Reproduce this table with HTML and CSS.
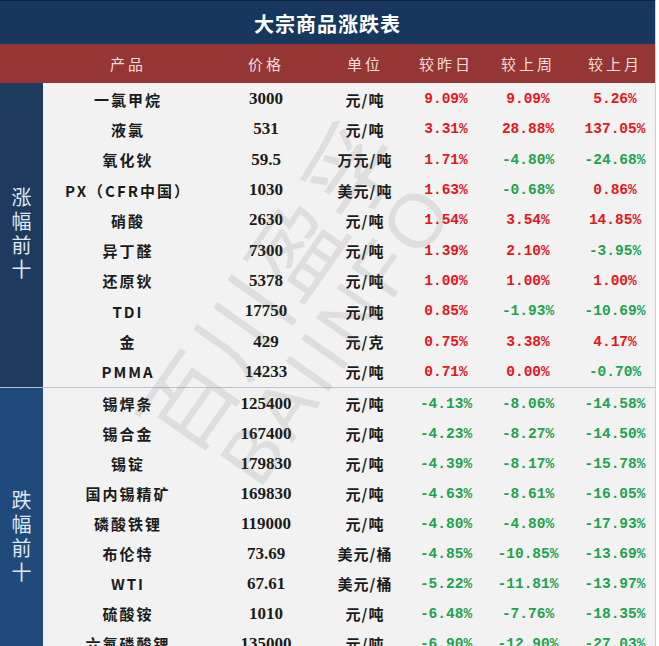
FILE: index.html
```html
<!DOCTYPE html>
<html lang="zh">
<head>
<meta charset="utf-8">
<title>大宗商品涨跌表</title>
<link rel="stylesheet" href="styles.css">
</head>
<body>
<div class="page">
  <div class="title">大宗商品涨跌表</div>
  <div class="head">
    <div></div>
    <div>产品</div><div>价格</div><div>单位</div><div>较昨日</div><div>较上周</div><div>较上月</div>
  </div>

  <div class="group up">
    <div class="side"><span>涨幅前十</span></div>
    <div class="rows">
      <div class="row"><div class="name">一氯甲烷</div><div class="price">3000</div><div class="unit">元/吨</div><div class="pct r">9.09%</div><div class="pct r">9.09%</div><div class="pct r">5.26%</div></div>
      <div class="row"><div class="name">液氯</div><div class="price">531</div><div class="unit">元/吨</div><div class="pct r">3.31%</div><div class="pct r">28.88%</div><div class="pct r">137.05%</div></div>
      <div class="row"><div class="name">氧化钬</div><div class="price">59.5</div><div class="unit">万元/吨</div><div class="pct r">1.71%</div><div class="pct g">-4.80%</div><div class="pct g">-24.68%</div></div>
      <div class="row"><div class="name">PX（CFR中国）</div><div class="price">1030</div><div class="unit">美元/吨</div><div class="pct r">1.63%</div><div class="pct g">-0.68%</div><div class="pct r">0.86%</div></div>
      <div class="row"><div class="name">硝酸</div><div class="price">2630</div><div class="unit">元/吨</div><div class="pct r">1.54%</div><div class="pct r">3.54%</div><div class="pct r">14.85%</div></div>
      <div class="row"><div class="name">异丁醛</div><div class="price">7300</div><div class="unit">元/吨</div><div class="pct r">1.39%</div><div class="pct r">2.10%</div><div class="pct g">-3.95%</div></div>
      <div class="row"><div class="name">还原钬</div><div class="price">5378</div><div class="unit">元/吨</div><div class="pct r">1.00%</div><div class="pct r">1.00%</div><div class="pct r">1.00%</div></div>
      <div class="row"><div class="name">TDI</div><div class="price">17750</div><div class="unit">元/吨</div><div class="pct r">0.85%</div><div class="pct g">-1.93%</div><div class="pct g">-10.69%</div></div>
      <div class="row"><div class="name">金</div><div class="price">429</div><div class="unit">元/克</div><div class="pct r">0.75%</div><div class="pct r">3.38%</div><div class="pct r">4.17%</div></div>
      <div class="row"><div class="name">PMMA</div><div class="price">14233</div><div class="unit">元/吨</div><div class="pct r">0.71%</div><div class="pct r">0.00%</div><div class="pct g">-0.70%</div></div>
    </div>
  </div>

  <div class="group down">
    <div class="side"><span>跌幅前十</span></div>
    <div class="rows">
      <div class="row"><div class="name">锡焊条</div><div class="price">125400</div><div class="unit">元/吨</div><div class="pct g">-4.13%</div><div class="pct g">-8.06%</div><div class="pct g">-14.58%</div></div>
      <div class="row"><div class="name">锡合金</div><div class="price">167400</div><div class="unit">元/吨</div><div class="pct g">-4.23%</div><div class="pct g">-8.27%</div><div class="pct g">-14.50%</div></div>
      <div class="row"><div class="name">锡锭</div><div class="price">179830</div><div class="unit">元/吨</div><div class="pct g">-4.39%</div><div class="pct g">-8.17%</div><div class="pct g">-15.78%</div></div>
      <div class="row"><div class="name">国内锡精矿</div><div class="price">169830</div><div class="unit">元/吨</div><div class="pct g">-4.63%</div><div class="pct g">-8.61%</div><div class="pct g">-16.05%</div></div>
      <div class="row"><div class="name">磷酸铁锂</div><div class="price">119000</div><div class="unit">元/吨</div><div class="pct g">-4.80%</div><div class="pct g">-4.80%</div><div class="pct g">-17.93%</div></div>
      <div class="row"><div class="name">布伦特</div><div class="price">73.69</div><div class="unit">美元/桶</div><div class="pct g">-4.85%</div><div class="pct g">-10.85%</div><div class="pct g">-13.69%</div></div>
      <div class="row"><div class="name">WTI</div><div class="price">67.61</div><div class="unit">美元/桶</div><div class="pct g">-5.22%</div><div class="pct g">-11.81%</div><div class="pct g">-13.97%</div></div>
      <div class="row"><div class="name">硫酸铵</div><div class="price">1010</div><div class="unit">元/吨</div><div class="pct g">-6.48%</div><div class="pct g">-7.76%</div><div class="pct g">-18.35%</div></div>
      <div class="row"><div class="name">六氟磷酸锂</div><div class="price">135000</div><div class="unit">元/吨</div><div class="pct g">-6.90%</div><div class="pct g">-12.90%</div><div class="pct g">-27.03%</div></div>
      <div class="row"></div>
    </div>
  </div>

  <div class="watermark">
    <div class="wm-cn">百川盈孚</div>
    <div class="wm-en">BAIINFO</div>
  </div>
</div>
</body>
</html>
```

FILE: styles.css
```css
* { box-sizing: border-box; margin: 0; padding: 0; }

html, body {
  background: #ffffff;
  overflow: hidden;
}

body {
  font-family: "Noto Sans CJK SC", "Liberation Sans", sans-serif;
  color: #1b1b1b;
}

.page {
  position: relative;
  width: 656px;
  border-right: 1px solid #c9d1dc;
  overflow: hidden;
}

.title {
  height: 44px;
  background: #17375e;
  border-top: 1px solid #0d2440;
  color: #ffffff;
  font-size: 20px;
  font-weight: 700;
  letter-spacing: 1px;
  display: flex;
  align-items: center;
  justify-content: center;
  padding-top: 2px;
}

.head {
  height: 39px;
  background: #963634;
  display: grid;
  grid-template-columns: 43px 170px 106px 92px 70px 94px 1fr;
  align-items: center;
  text-align: center;
  color: #f4dede;
  font-size: 15px;
  letter-spacing: 3px;
}

.group {
  display: grid;
  grid-template-columns: 43px 1fr;
  background: #f2f2f2;
}

.group.down {
  border-top: 1px solid #b7c3d3;
}

.side {
  display: flex;
  align-items: center;
  justify-content: center;
  color: #dfe8f3;
  font-size: 20px;
}

.side span {
  writing-mode: vertical-rl;
  text-orientation: upright;
  letter-spacing: 4px;
}

.up .side { background: #1f3a5f; }
.down .side { background: #1f4a7b; }

.rows {
  display: flex;
  flex-direction: column;
  padding-top: 1px;
}

.up .row { height: 30.3px; }
.down .row { height: 30px; }

.row {
  display: grid;
  grid-template-columns: 170px 106px 92px 70px 94px 1fr;
  align-items: center;
  text-align: center;
  white-space: nowrap;
}

.name {
  font-size: 15px;
  font-weight: 700;
  letter-spacing: 2px;
}

.unit {
  font-size: 15px;
  font-weight: 700;
  letter-spacing: 1px;
}

.price {
  font-family: "Liberation Serif", serif;
  font-weight: 700;
  font-size: 17px;
}

.pct {
  font-family: "Liberation Mono", monospace;
  font-weight: 700;
  font-size: 14.5px;
}

.pct.r { color: #e3161d; }
.pct.g { color: #20a24e; }

.watermark {
  position: absolute;
  left: 110px;
  top: 220px;
  transform: rotate(-55deg);
  transform-origin: center;
  color: rgba(90, 90, 90, 0.13);
  font-family: "Noto Sans CJK SC", sans-serif;
  font-weight: 400;
  pointer-events: none;
  text-align: center;
  line-height: 1;
}

.wm-cn {
  font-size: 92px;
  letter-spacing: 2px;
}

.wm-en {
  font-family: "Liberation Sans", sans-serif;
  font-size: 76px;
  letter-spacing: 6px;
  margin-top: 4px;
}
```
